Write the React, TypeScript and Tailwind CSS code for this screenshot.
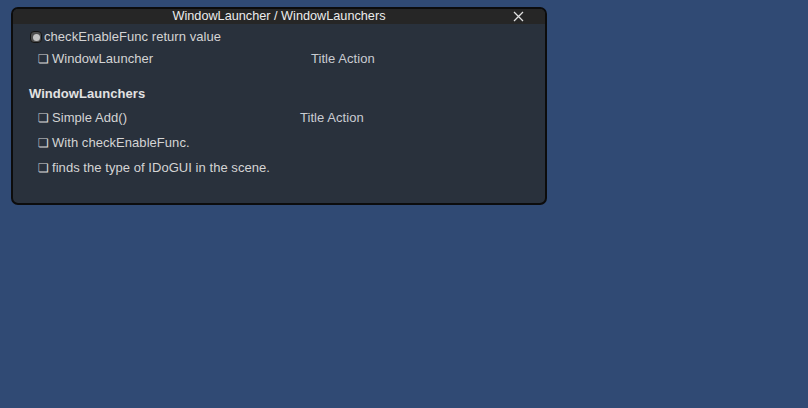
import React from 'react';

const font = { fontFamily: '"Liberation Sans", Arial, sans-serif' };

function Box() {
  return (
    <span className="w-[14px] shrink-0 text-[12px] leading-none text-[#d6d6d6]" style={{ fontFamily: '"DejaVu Sans", sans-serif' }}>
      ❏
    </span>
  );
}

function Row({ label, action, width, tall }: { label: string; action?: string; width?: string; tall?: boolean }) {
  return (
    <div className={`flex items-center pl-[25px] ${tall ? 'h-[25px]' : 'h-[22px]'}`}>
      <Box />
      <span className={width ?? ''}>{label}</span>
      {action && <span className="text-[#c9ccd2]">{action}</span>}
    </div>
  );
}

export default function App() {
  return (
    <div className="w-full h-[408px] bg-[#304a74] pt-[7px] pl-[11px]" style={font}>
      <div className="w-[536px] h-[198px] border-2 border-[#0c0c0c] rounded-[7px] overflow-hidden bg-[#29313c] text-[13px] tracking-[0.05px] text-[#d4d4d4]">
        <div className="relative h-[15px] bg-[#262626] flex items-center justify-center text-[12.7px] tracking-normal text-[#ececec] leading-none">
          <span>WindowLauncher / WindowLaunchers</span>
          <svg className="absolute right-[21px] top-[2px]" width="11" height="11" viewBox="0 0 11 11">
            <path d="M1 1 L10 10 M10 1 L1 10" stroke="#e0e0e0" strokeWidth="1.3" />
          </svg>
        </div>
        <div className="mt-[2px] flex items-center h-[22px] pl-[17px]">
          <span className="flex items-center justify-center shrink-0 w-[12px] h-[12px] rounded-[4px] border border-[#141414] bg-[#4e4e4e] mr-[2px]">
            <span className="w-[7px] h-[7px] rounded-full bg-[#c4c4c4]" />
          </span>
          <span>checkEnableFunc return value</span>
        </div>
        <Row label="WindowLauncher" action="Title Action" width="w-[259px]" />
        <div className="mt-[13px] h-[22px] flex items-center pl-[16px] font-bold text-[#e2e2e2]">WindowLaunchers</div>
        <Row label="Simple Add()" action="Title Action" width="w-[248px]" tall />
        <Row label="With checkEnableFunc." tall />
        <Row label="finds the type of IDoGUI in the scene." tall />
      </div>
    </div>
  );
}
